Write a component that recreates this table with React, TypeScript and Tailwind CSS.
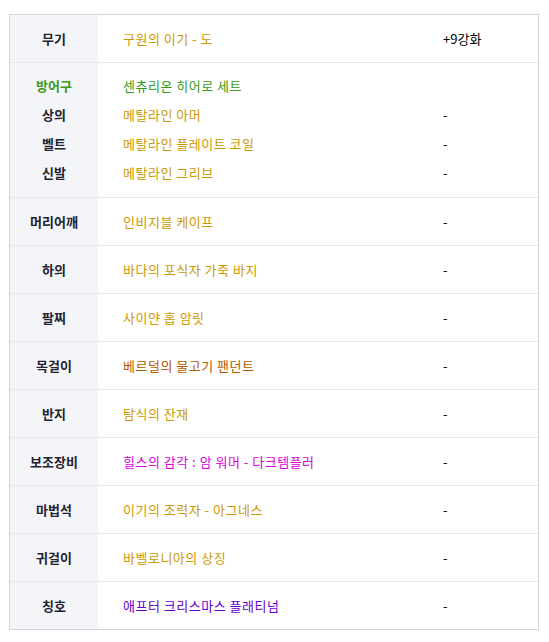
const FONT = "font-['Noto_Sans_CJK_KR','Noto_Sans',sans-serif]";

type Row = { label: string; value: string; color: string; extra: string };

const rows: Row[] = [
  { label: "머리어깨", value: "인비지블 케이프", color: "text-[#cc9900]", extra: "-" },
  { label: "하의", value: "바다의 포식자 가죽 바지", color: "text-[#cc9900]", extra: "-" },
  { label: "팔찌", value: "사이얀 홉 암릿", color: "text-[#cc9900]", extra: "-" },
  { label: "목걸이", value: "베르덜의 물고기 팬던트", color: "text-[#b35900]", extra: "-" },
  { label: "반지", value: "탐식의 잔재", color: "text-[#cc9900]", extra: "-" },
  { label: "보조장비", value: "힐스의 감각 : 암 워머 - 다크템플러", color: "text-[#dd00dd]", extra: "-" },
  { label: "마법석", value: "이기의 조력자 - 아그네스", color: "text-[#cc9900]", extra: "-" },
  { label: "귀걸이", value: "바벨로니아의 상징", color: "text-[#cc9900]", extra: "-" },
  { label: "칭호", value: "애프터 크리스마스 플래티넘", color: "text-[#6600cc]", extra: "-" },
];

const armor = [
  { label: "방어구", value: "센츄리온 히어로 세트", extra: "", green: true },
  { label: "상의", value: "메탈라인 아머", extra: "-", green: false },
  { label: "벨트", value: "메탈라인 플레이트 코일", extra: "-", green: false },
  { label: "신발", value: "메탈라인 그리브", extra: "-", green: false },
];

function Line({ label, value, color, extra, labelColor, height }: {
  label: string; value: string; color: string; extra: string; labelColor: string; height: string;
}) {
  return (
    <div className={`grid grid-cols-[88px_1fr_95px] items-center ${height}`}>
      <div className={`text-center font-bold ${labelColor}`}>{label}</div>
      <div className={`pl-[25px] tracking-[0.5px] ${color}`}>{value}</div>
      <div className="text-black">{extra}</div>
    </div>
  );
}

export default function App() {
  return (
    <div className={`min-h-[642px] bg-white pt-[14px] pl-[9px] text-[13px] ${FONT}`}>
      <div className="w-[530px] border border-[#d3d3da] bg-[linear-gradient(to_right,#f4f5f9_88px,#ffffff_88px)]">
        <Line label="무기" value="구원의 이기 - 도" color="text-[#cc9900]" extra="+9강화" labelColor="text-[#222233]" height="h-[47px]" />
        <div className="border-t border-[#e8e8ec] pt-[8px] pb-[10px]">
          {armor.map((a) => (
            <Line
              key={a.label}
              label={a.label}
              value={a.value}
              color={a.green ? "text-[#3a9a1a]" : "text-[#cc9900]"}
              extra={a.extra}
              labelColor={a.green ? "text-[#3a9a1a]" : "text-[#222233]"}
              height="h-[29px]"
            />
          ))}
        </div>
        {rows.map((r) => (
          <div key={r.label} className="border-t border-[#e8e8ec]">
            <Line {...r} labelColor="text-[#222233]" height="h-[47px]" />
          </div>
        ))}
      </div>
    </div>
  );
}
